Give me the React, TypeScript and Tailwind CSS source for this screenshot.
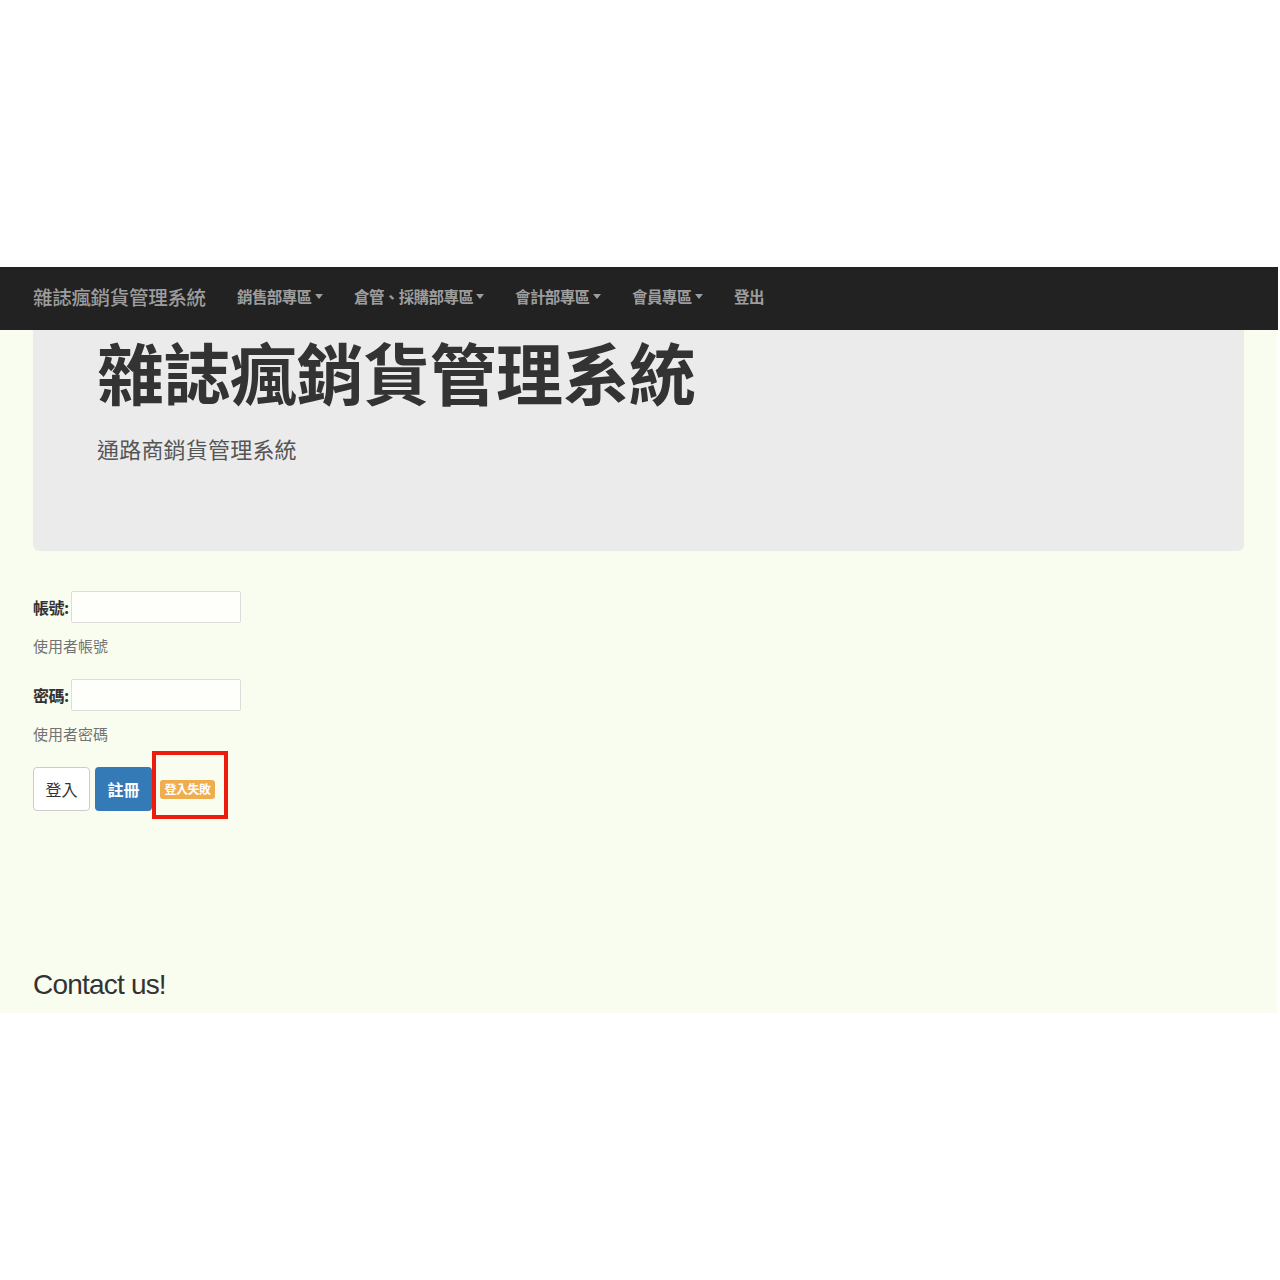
import React from 'react';

const cjk = { fontFamily: '"Noto Sans CJK TC", "Noto Sans", sans-serif' };

const Caret: React.FC = () => (
  <span className="ml-[3px] inline-block h-0 w-0 border-x-[4px] border-t-[5px] border-x-transparent border-t-[#9d9d9d] align-middle" />
);

const navItems = [
  { label: '銷售部專區', caret: true, w: 'w-[85px]' },
  { label: '倉管、採購部專區', caret: true, w: 'w-[129px]' },
  { label: '會計部專區', caret: true, w: 'w-[85px]' },
  { label: '會員專區', caret: true, w: 'w-[70px]' },
  { label: '登出', caret: false, w: 'w-[30px]' },
];

export default function App() {
  return (
    <div className="w-[1280px] bg-white" style={cjk}>
      <div className="h-[267px]" />

      <nav className="flex h-[63px] w-[1278px] items-center bg-[#222222] pb-[4px] pl-[33px]">
        <span className="w-[172px] whitespace-nowrap text-[19.5px] font-medium tracking-[-0.3px] text-[#9d9d9d]">雜誌瘋銷貨管理系統</span>
        <div className="ml-[32px] flex items-center gap-[32px]">
          {navItems.map((it) => (
            <span key={it.label} className={`flex items-center whitespace-nowrap text-[15.5px] font-bold tracking-[-0.6px] text-[#9d9d9d] ${it.w}`}>
              {it.label}
              {it.caret && <Caret />}
            </span>
          ))}
        </div>
      </nav>

      <main className="h-[683px] w-[1277px] bg-[#f9fdf0] px-[33px]">
        <section className="h-[221px] rounded-b-[6px] bg-[#ebebeb] pl-[64px] pt-[3px]">
          <h1 className="text-[67px] font-bold leading-[76px] tracking-[-0.5px] text-[#333333]">雜誌瘋銷貨管理系統</h1>
          <p className="mt-[24px] text-[22px] leading-[30px] tracking-[0.2px] text-[#555555]">通路商銷貨管理系統</p>
        </section>

        <form className="pt-[40px]" onSubmit={(e) => e.preventDefault()}>
          <div className="flex h-[32px] items-center">
            <label className="mr-[2px] text-[16px] font-bold tracking-[-0.5px] text-[#333333]">帳號:</label>
            <input className="h-[32px] w-[170px] rounded-[2px] border border-[#dddddd] bg-[#fefffb] px-2" />
          </div>
          <p className="mt-[12px] text-[15px] leading-[22px] text-[#737373]">使用者帳號</p>

          <div className="mt-[22px] flex h-[32px] items-center">
            <label className="mr-[2px] text-[16px] font-bold tracking-[-0.5px] text-[#333333]">密碼:</label>
            <input type="password" className="h-[32px] w-[170px] rounded-[2px] border border-[#dddddd] bg-[#fefffb] px-2" />
          </div>
          <p className="mt-[12px] text-[15px] leading-[22px] text-[#737373]">使用者密碼</p>

          <div className="mt-[22px] flex h-[44px] items-center">
            <button type="button" className="h-[44px] w-[57px] rounded-[4px] border border-[#cccccc] bg-white text-[16px] text-[#333333]">
              登入
            </button>
            <button type="button" className="ml-[5px] h-[44px] w-[57px] rounded-[4px] bg-[#337ab7] text-[16px] font-bold text-white">
              註冊
            </button>
            <span className="relative ml-[8px] inline-flex h-[19px] w-[55px] items-center justify-center rounded-[3px] bg-[#f0ad4e] text-[12px] font-bold tracking-[-0.5px] text-white">
              登入失敗
              <span className="absolute left-[-8px] top-[-29px] h-[68px] w-[76px] border-[4px] border-[#ee1c0e]" />
            </span>
          </div>
        </form>

        <h3
          className="mt-[157px] text-[28px] leading-[34px] tracking-[-0.8px] text-[#333333]"
          style={{ fontFamily: '"Liberation Sans", Arial, sans-serif' }}
        >
          Contact us!
        </h3>
      </main>
    </div>
  );
}
